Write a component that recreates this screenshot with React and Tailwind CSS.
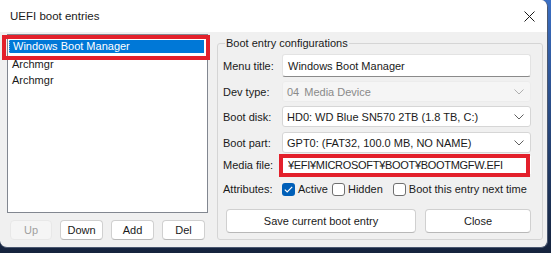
import React from "react";

function Chevron({ color = "#5f5f5f" }) {
  return (
    <svg width="10" height="6" viewBox="0 0 10 6" className="shrink-0">
      <path d="M0.5 0.5 L5 5 L9.5 0.5" fill="none" stroke={color} strokeWidth="1" />
    </svg>
  );
}

function Label({ children }) {
  return <div className="w-[59px] shrink-0 whitespace-nowrap text-[#1a1a1a]">{children}</div>;
}

function Combo({ children, disabled }) {
  return (
    <div
      className={
        "flex-1 h-[21px] flex items-center justify-between pl-[4px] pr-[6px] rounded-[3px] border " +
        (disabled ? "bg-[#f5f5f5] border-[#ececec] text-[#8a8a8a]" : "bg-white border-[#d6d6d6] text-[#1a1a1a]")
      }
    >
      <span className="whitespace-nowrap">{children}</span>
      <Chevron color={disabled ? "#b0b0b0" : "#5f5f5f"} />
    </div>
  );
}

function CheckBox({ checked }) {
  return checked ? (
    <div className="w-[13px] h-[13px] rounded-[3px] bg-[#005fb8] flex items-center justify-center shrink-0">
      <svg width="9" height="7" viewBox="0 0 9 7">
        <path d="M0.8 3.6 L3.2 5.9 L8.2 0.9" fill="none" stroke="white" strokeWidth="1.2" />
      </svg>
    </div>
  ) : (
    <div className="w-[13px] h-[13px] rounded-[3px] bg-white border border-[#6f6f6f] shrink-0" />
  );
}

function Btn({ children, className = "", disabled }) {
  return (
    <div
      className={
        "flex items-center justify-center rounded-[4px] border " +
        (disabled
          ? "bg-[#f5f5f5] border-[#e8e8e8] text-[#a0a0a0] "
          : "bg-white border-[#d0d0d0] border-b-[#b8b8b8] text-[#1a1a1a] ") +
        className
      }
    >
      {children}
    </div>
  );
}

export default function App() {
  return (
    <div
      className="relative w-[551px] h-[253px] overflow-hidden bg-gradient-to-b from-[#3b6fc4] to-[#15233d] text-[11px] leading-[14px]"
      style={{ fontFamily: '"Liberation Sans", Arial, sans-serif' }}
    >
      <div className="w-[548px] h-[248px] bg-[#f0f0f0] rounded-tr-[7px] rounded-b-[7px] border-r border-b border-[#4b5870] flex flex-col overflow-hidden">
        {/* title bar */}
        <div className="h-[32px] shrink-0 bg-white flex items-center justify-between pl-[10px] pr-[7px]">
          <span className="text-[#1a1a1a] text-[11.5px]">UEFI boot entries</span>
          <svg width="11" height="11" viewBox="0 0 11 11" className="mr-[5px]">
            <path d="M0.5 0.5 L10.5 10.5 M10.5 0.5 L0.5 10.5" stroke="#1a1a1a" strokeWidth="1" />
          </svg>
        </div>

        {/* body */}
        <div className="flex flex-1 pt-[2px] pl-[7px]">
          {/* left column */}
          <div className="w-[201px] shrink-0 flex flex-col">
            <div className="h-[179px] bg-white border border-[#828790] pt-[5px] pl-[1px] pr-[3px] text-[#1a1a1a]">
              <div className="h-[13px] leading-[13px] bg-[#0078d7] text-white pl-[3px] border-l border-dotted border-[#7fb6ea]">
                Windows Boot Manager
              </div>
              <div className="pl-[3px] mt-[3px] h-[16px] leading-[16px]">Archmgr</div>
              <div className="pl-[3px] h-[16px] leading-[16px]">Archmgr</div>
            </div>
            <div className="flex gap-[8px] pl-[3px] mt-[7px]">
              <Btn disabled className="w-[42px] h-[20px]">Up</Btn>
              <Btn className="w-[43px] h-[20px]">Down</Btn>
              <Btn className="w-[43px] h-[20px]">Add</Btn>
              <Btn className="w-[43px] h-[20px]">Del</Btn>
            </div>
          </div>

          {/* group box */}
          <fieldset className="ml-[9px] mt-[1px] w-[326px] h-[205px] border border-[#d5d5d5] rounded-[3px] pl-[5px] pr-[11px] pt-[3px] text-[#1a1a1a]">
            <legend className="ml-[2px] px-[1px] leading-[16px]">Boot entry configurations</legend>
            <div className="flex flex-col">
              <div className="flex items-center h-[23px]">
                <Label>Menu title:</Label>
                <div className="flex-1 h-[23px] bg-white border border-[#e3e3e3] border-b-[#8a8a8a] rounded-[3px] flex items-center pl-[5px]">
                  Windows Boot Manager
                </div>
              </div>
              <div className="flex items-center h-[21px] mt-[4px]">
                <Label>Dev type:</Label>
                <Combo disabled>
                  <span className="mr-[5px]">04</span>Media Device
                </Combo>
              </div>
              <div className="flex items-center h-[21px] mt-[4px]">
                <Label>Boot disk:</Label>
                <Combo>HD0: WD Blue SN570 2TB (1.8 TB, C:)</Combo>
              </div>
              <div className="flex items-center h-[21px] mt-[5px]">
                <Label>Boot part:</Label>
                <Combo>GPT0: (FAT32, 100.0 MB, NO NAME)</Combo>
              </div>
              <div className="flex items-center h-[18px] mt-[3px]">
                <Label>Media file:</Label>
                <div className="flex-1 h-[18px] bg-white flex items-center pl-[6px] whitespace-nowrap tracking-[-0.3px]">
                  ¥EFI¥MICROSOFT¥BOOT¥BOOTMGFW.EFI
                </div>
              </div>
              <div className="flex items-center h-[16px] mt-[7px] whitespace-nowrap">
                <Label>Attributes:</Label>
                <div className="flex items-center gap-[3px]">
                  <CheckBox checked />
                  <span>Active</span>
                </div>
                <div className="flex items-center gap-[3px] ml-[4px]">
                  <CheckBox />
                  <span>Hidden</span>
                </div>
                <div className="flex items-center gap-[3px] ml-[10px]">
                  <CheckBox />
                  <span>Boot this entry next time</span>
                </div>
              </div>
              <div className="flex gap-[9px] mt-[12px] pl-[3px]">
                <Btn className="w-[190px] h-[24px]">Save current boot entry</Btn>
                <Btn className="w-[106px] h-[24px]">Close</Btn>
              </div>
            </div>
          </fieldset>
        </div>
      </div>

      {/* red annotation boxes */}
      <div className="absolute left-[2px] top-[35px] w-[208px] h-[25px] border-[4px] border-[#e3202b] pointer-events-none" />
      <div className="absolute left-[279px] top-[154px] w-[251px] h-[23px] border-[4px] border-[#e3202b] pointer-events-none" />
    </div>
  );
}
